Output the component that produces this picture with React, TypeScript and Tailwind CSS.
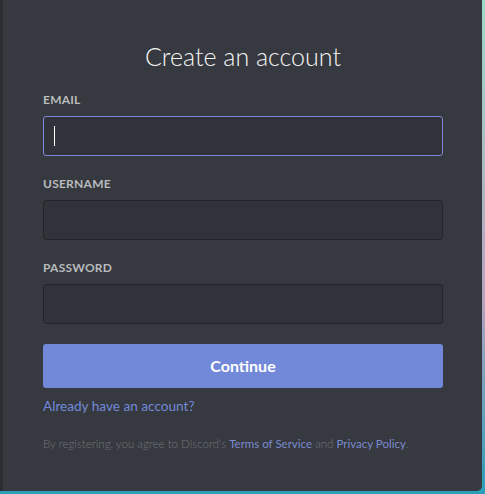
const Field = ({ label, focused }: { label: string; focused?: boolean }) => (
  <div className="flex flex-col">
    <label className="text-[12px] leading-4 font-bold tracking-[0.02em] text-[#b9bbbe]">{label}</label>
    <div
      className={
        'mt-2 h-10 rounded-[3px] border bg-[#303339] flex items-center px-[10px] ' +
        (focused ? 'border-[#7f85d6]' : 'border-[#222428]')
      }
    >
      {focused && <span className="w-px h-5 bg-white" />}
    </div>
  </div>
);

export default function App() {
  return (
    <div
      className="w-[485px] h-[494px] flex"
      style={{ background: 'linear-gradient(180deg, #9bd9c8 0%, #b8a3bf 60%, #2a9fb9 100%)' }}
    >
      <div className="w-[482px] h-[491px] flex">
        <div className="w-[3px] bg-[#2c2e33]" />
        <div
          className="flex-1 bg-[#36393f] rounded-br-[5px] pt-10 pl-[40px] pr-[39px] flex flex-col"
          style={{ fontFamily: 'Lato, "Noto Sans", sans-serif' }}
        >
          <h1 className="text-center text-[25px] leading-8 font-light text-[#f6f6f7] mb-5">Create an account</h1>
          <div className="flex flex-col gap-5">
            <Field label="EMAIL" focused />
            <Field label="USERNAME" />
            <Field label="PASSWORD" />
            <button className="h-11 rounded-[3px] bg-[#7289da] text-white text-[16px] font-bold">Continue</button>
          </div>
          <a className="mt-2 text-[13.6px] leading-5 text-[#7289da] self-start">Already have an account?</a>
          <p className="mt-5 text-[11.5px] leading-4 font-light text-[#72767d]">
            By registering, you agree to Discord's{' '}
            <span className="font-normal text-[#7a8bd0]">Terms of Service</span> and{' '}
            <span className="font-normal text-[#7a8bd0]">Privacy Policy</span>.
          </p>
        </div>
      </div>
    </div>
  );
}
